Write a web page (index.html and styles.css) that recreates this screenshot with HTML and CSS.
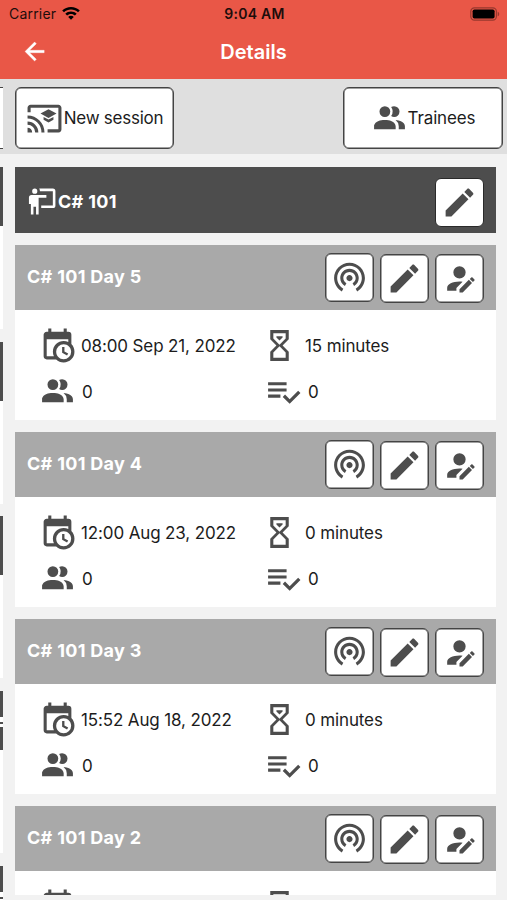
FILE: index.html
```html
<!DOCTYPE html>
<html lang="en">
<head>
    <meta charset="UTF-8">
    <meta name="viewport" content="width=device-width, initial-scale=1.0">
    <title>Details</title>
    <link rel="stylesheet" href="styles.css">
</head>
<body>
    <!-- icons -->
    <svg class="sprite">
        <symbol id="people" viewBox="0 0 24 24"><path d="M16 17V19H2V17S2 13 9 13 16 17 16 17M12.5 7.5A3.5 3.5 0 1 0 9 11A3.5 3.5 0 0 0 12.5 7.5M15.94 13A5.32 5.32 0 0 1 18 17V19H22V17S22 13.37 15.94 13M15 4A3.39 3.39 0 0 0 13.07 4.59A5 5 0 0 1 13.07 10.41A3.39 3.39 0 0 0 15 11A3.5 3.5 0 0 0 15 4Z"/></symbol>
        <symbol id="pencil" viewBox="0 0 24 24"><path d="M20.71,7.04C21.1,6.65 21.1,6 20.71,5.63L18.37,3.29C18,2.9 17.35,2.9 16.96,3.29L15.12,5.12L18.87,8.87M3,17.25V21H6.75L17.81,9.93L14.06,6.18L3,17.25Z"/></symbol>
        <symbol id="account-edit" viewBox="0 0 24 24"><path d="M21.7,13.35L20.7,14.35L18.65,12.3L19.65,11.3C19.86,11.09 20.21,11.09 20.42,11.3L21.7,12.58C21.91,12.79 21.91,13.14 21.7,13.35M12,18.94L18.06,12.88L20.11,14.93L14.06,21H12V18.94M12,14C7.58,14 4,15.79 4,18V20H10V18.11L14,14.11C13.34,14.03 12.67,14 12,14M12,4A4,4 0 0,0 8,8A4,4 0 0,0 12,12A4,4 0 0,0 16,8A4,4 0 0,0 12,4Z"/></symbol>
        <symbol id="broadcast" viewBox="0 0 24 24"><path d="M12 11c-1.1 0-2 .9-2 2s.9 2 2 2 2-.9 2-2-.9-2-2-2zm6 2c0-3.31-2.69-6-6-6s-6 2.69-6 6c0 2.22 1.21 4.15 3 5.19l1-1.74c-1.19-.7-2-1.97-2-3.45 0-2.21 1.79-4 4-4s4 1.79 4 4c0 1.48-.81 2.75-2 3.45l1 1.74c1.79-1.04 3-2.97 3-5.19zM12 3C6.48 3 2 7.48 2 13c0 3.7 2.01 6.92 4.99 8.65l1-1.73C5.61 18.53 4 15.96 4 13c0-4.42 3.58-8 8-8s8 3.58 8 8c0 2.96-1.61 5.53-4 6.92l1 1.73c2.99-1.73 5-4.95 5-8.65 0-5.52-4.48-10-10-10z"/></symbol>
        <symbol id="cast" viewBox="0 0 24 24"><path d="M1,10V12A9,9 0 0,1 10,21H12C12,14.92 7.07,10 1,10M1,14V16A5,5 0 0,1 6,21H8A7,7 0 0,0 1,14M1,18V21H4A3,3 0 0,0 1,18M21,3H3C1.89,3 1,3.89 1,5V8H3V5H21V19H14V21H21A2,2 0 0,0 23,19V5C23,3.89 22.1,3 21,3ZM14.6,6L9.4,8.8L14.6,11.6L19.8,8.8ZM11.4,11V12.8L14.6,14.6L17.8,12.8V11L14.6,12.7Z"/></symbol>
        <symbol id="board" viewBox="0 0 24 24"><path d="M20,17A2,2 0 0,0 22,15V4A2,2 0 0,0 20,2H9.46C9.81,2.61 10,3.3 10,4H20V15H11V17M15,7V9H9V22H7V16H5V22H3V14H1.5V9A2,2 0 0,1 3.5,7H15M8,4A2,2 0 0,1 6,6A2,2 0 0,1 4,4A2,2 0 0,1 6,2A2,2 0 0,1 8,4Z"/></symbol>
        <symbol id="calendar" viewBox="0 0 24 24"><path d="M15,13H16.5V15.82L18.94,17.23L18.19,18.53L15,16.69V13M19,8H5V19H9.67C9.24,18.09 9,17.07 9,16A7,7 0 0,1 16,9C17.07,9 18.09,9.24 19,9.67V8M5,21C3.89,21 3,20.1 3,19V5C3,3.89 3.89,3 5,3H6V1H8V3H16V1H18V3H19A2,2 0 0,1 21,5V11.1C22.24,12.36 23,14.09 23,16A7,7 0 0,1 16,23C14.09,23 12.36,22.24 11.1,21H5M16,11.15A4.85,4.85 0 0,0 11.15,16C11.15,18.68 13.32,20.85 16,20.85A4.85,4.85 0 0,0 20.85,16C20.85,13.32 18.68,11.15 16,11.15Z"/></symbol>
        <symbol id="sand" viewBox="0 0 24 24"><path d="M6,2H18V8L14,12L18,16V22H6V16L10,12L6,8V2M16,16.5L12,12.5L8,16.5V20H16V16.5M12,11.5L16,7.5V4H8V7.5L12,11.5M10,6H14V6.75L12,8.75L10,6.75V6Z"/></symbol>
        <symbol id="check" viewBox="0 0 24 24"><path d="M14,10H2V12H14V10M14,6H2V8H14V6M2,16H10V14H2V16M21.5,11.5L23,13L16,20L11.5,15.5L13,14L16,17L21.5,11.5Z"/></symbol>
        <symbol id="back" viewBox="0 0 24 24"><path d="M20,11V13H8L13.5,18.5L12.08,19.92L4.16,12L12.08,4.08L13.5,5.5L8,11H20Z"/></symbol>
    </svg>

    <header>
        <div class="status">
            <div class="carrier">
                Carrier
                <svg width="18" height="14" viewBox="0 0 18 14"><path d="M9 0C5.6 0 2.5 1.3 .2 3.5L2 5.3C3.8 3.6 6.3 2.6 9 2.6S14.2 3.6 16 5.3L17.8 3.5C15.5 1.3 12.4 0 9 0ZM9 4.5C6.8 4.5 4.8 5.3 3.3 6.7L5.1 8.5C6.1 7.6 7.5 7 9 7S11.9 7.6 12.9 8.5L14.7 6.7C13.2 5.3 11.2 4.5 9 4.5ZM9 8.8C7.9 8.8 6.9 9.2 6.2 9.9L9 12.8L11.8 9.9C11.1 9.2 10.1 8.8 9 8.8Z"/></svg>
            </div>
            <div class="clock">9:04 AM</div>
            <svg class="battery" width="30" height="14" viewBox="0 0 30 14">
                <rect class="case" x=".8" y=".8" width="25.6" height="12.4" rx="3.6"/>
                <rect x="2.6" y="2.5" width="22" height="9" rx="1.8"/>
                <path class="tip" d="M27.7 4.7C29.7 5.4 29.7 8.6 27.7 9.3Z"/>
            </svg>
        </div>
        <div class="nav">
            <svg class="back"><use href="#back"/></svg>
            <h1>Details</h1>
        </div>
    </header>

    <div class="page">
        <!-- edge of the previous list -->
        <div class="peek">
            <div class="peek-bar"><div class="peek-button"></div></div>
            <div class="peek-card"></div>
            <div class="peek-card"></div>
            <div class="peek-card"></div>
            <div class="peek-card long"></div>
            <div class="peek-card long"></div>
        </div>

        <main>
            <div class="toolbar">
                <button class="wide new"><svg class="icon"><use href="#cast"/></svg>New session</button>
                <button class="wide"><svg class="icon"><use href="#people"/></svg>Trainees</button>
            </div>
            <div class="list">
                <div class="course">
                    <svg class="icon small"><use href="#board"/></svg>
                    <h2>C# 101</h2>
                    <button class="square"><svg class="icon"><use href="#pencil"/></svg></button>
                </div>

                <section class="session">
                    <div class="head">
                        <h2>C# 101 Day 5</h2>
                        <button class="square live"><svg class="icon"><use href="#broadcast"/></svg></button>
                        <button class="square"><svg class="icon"><use href="#pencil"/></svg></button>
                        <button class="square"><svg class="icon"><use href="#account-edit"/></svg></button>
                    </div>
                    <div class="info">
                        <div class="date"><svg class="icon"><use href="#calendar"/></svg>08:00 Sep 21, 2022</div>
                        <div class="time"><svg class="icon"><use href="#sand"/></svg>15 minutes</div>
                        <div class="count"><svg class="icon"><use href="#people"/></svg>0</div>
                        <div class="count done"><svg class="icon"><use href="#check"/></svg>0</div>
                    </div>
                </section>

                <section class="session">
                    <div class="head">
                        <h2>C# 101 Day 4</h2>
                        <button class="square live"><svg class="icon"><use href="#broadcast"/></svg></button>
                        <button class="square"><svg class="icon"><use href="#pencil"/></svg></button>
                        <button class="square"><svg class="icon"><use href="#account-edit"/></svg></button>
                    </div>
                    <div class="info">
                        <div class="date"><svg class="icon"><use href="#calendar"/></svg>12:00 Aug 23, 2022</div>
                        <div class="time"><svg class="icon"><use href="#sand"/></svg>0 minutes</div>
                        <div class="count"><svg class="icon"><use href="#people"/></svg>0</div>
                        <div class="count done"><svg class="icon"><use href="#check"/></svg>0</div>
                    </div>
                </section>

                <section class="session">
                    <div class="head">
                        <h2>C# 101 Day 3</h2>
                        <button class="square live"><svg class="icon"><use href="#broadcast"/></svg></button>
                        <button class="square"><svg class="icon"><use href="#pencil"/></svg></button>
                        <button class="square"><svg class="icon"><use href="#account-edit"/></svg></button>
                    </div>
                    <div class="info">
                        <div class="date"><svg class="icon"><use href="#calendar"/></svg>15:52 Aug 18, 2022</div>
                        <div class="time"><svg class="icon"><use href="#sand"/></svg>0 minutes</div>
                        <div class="count"><svg class="icon"><use href="#people"/></svg>0</div>
                        <div class="count done"><svg class="icon"><use href="#check"/></svg>0</div>
                    </div>
                </section>

                <section class="session">
                    <div class="head">
                        <h2>C# 101 Day 2</h2>
                        <button class="square live"><svg class="icon"><use href="#broadcast"/></svg></button>
                        <button class="square"><svg class="icon"><use href="#pencil"/></svg></button>
                        <button class="square"><svg class="icon"><use href="#account-edit"/></svg></button>
                    </div>
                    <div class="info">
                        <div class="date"><svg class="icon"><use href="#calendar"/></svg></div>
                        <div class="time"><svg class="icon"><use href="#sand"/></svg></div>
                    </div>
                </section>
            </div>
        </main>
    </div>
</body>
</html>
```
FILE: styles.css
```css
* {
    box-sizing: border-box;
}

body {
    margin: 0;
    height: 900px;
    overflow: hidden;
    display: flex;
    flex-direction: column;
    background-color: #f2f2f2;
    font-family: 'Inter', sans-serif;
    font-size: 17px;
    letter-spacing: -0.13px;
    color: #1c1c1c;
}

.sprite {
    display: none;
}

header {
    height: 79px;
    flex: none;
    background-color: #e95747;
}

.status {
    display: grid;
    grid-template-columns: 1fr auto 1fr;
    align-items: center;
    height: 27px;
    padding: 0 7px 0 9px;
    font-size: 14px;
    color: #1d0d0b;
}

.carrier {
    display: flex;
    align-items: center;
    gap: 6px;
    letter-spacing: 0.2px;
}

.clock {
    font-weight: 600;
    letter-spacing: 0.25px;
}

.battery {
    justify-self: end;
}

.case {
    fill: none;
    stroke: #96382e;
    stroke-width: 1.2;
}

.tip {
    fill: #96382e;
}

.nav {
    display: grid;
    grid-template-columns: 1fr auto 1fr;
    align-items: center;
    height: 50px;
    color: white;
}

.back {
    width: 29px;
    height: 29px;
    margin: 0 0 1px 20px;
    fill: white;
    stroke: white;
    stroke-width: 0.3;
}

h1 {
    margin: 0;
    font-size: 20px;
    font-weight: 600;
    letter-spacing: 0;
}

h2 {
    margin: 0;
    font-size: 18px;
    font-weight: 700;
    letter-spacing: 0.3px;
    color: white;
}

.page {
    flex: 1;
    min-height: 0;
    display: flex;
}

.peek {
    width: 3px;
    overflow: hidden;
}

.peek-bar {
    height: 75px;
    padding-top: 8px;
    margin-bottom: 13px;
    background-color: #dfdfdf;
}

.peek-button {
    height: 62px;
    background-color: white;
    border: solid #444;
    border-width: 1px 0;
}

.peek-card {
    height: 162px;
    margin-bottom: 12.7px;
    background: linear-gradient(#4d4d4d 59px, white 59px);
}

.peek-card.long {
    background: linear-gradient(#4d4d4d 26px, white 26px 31px, #4d4d4d 31px 33px, white 33px 36px, #4d4d4d 36px 59px, white 59px);
}

main {
    flex: 1;
    display: flex;
    flex-direction: column;
    min-height: 0;
}

.toolbar {
    flex: none;
    display: flex;
    justify-content: space-between;
    height: 75px;
    padding: 8px 4px 0 12px;
    background-color: #dfdfdf;
}

button {
    display: flex;
    align-items: center;
    justify-content: center;
    padding: 0;
    font: inherit;
    letter-spacing: inherit;
    color: inherit;
    background-color: white;
    border: 1px solid #444;
    border-radius: 6px;
    box-shadow: inset 0 0 0 0.5px #444;
}

.wide {
    width: 160px;
    height: 62px;
}

.wide.new {
    width: 159px;
    gap: 1px;
    letter-spacing: -0.25px;
}

.square {
    flex: none;
    width: 49px;
    height: 49px;
}

.icon {
    flex: none;
    width: 37px;
    height: 37px;
    fill: #4d4d4d;
}

.icon.small {
    width: 31px;
    height: 31px;
    fill: white;
}

.list {
    flex: 1;
    min-height: 0;
    overflow: hidden;
    display: flex;
    flex-direction: column;
    gap: 12px;
    margin-bottom: 5px;
    padding: 13px 11px 0 12px;
}

.course {
    flex: none;
    display: flex;
    align-items: center;
    height: 66px;
    padding: 2px 12px 0 12px;
    background-color: #4d4d4d;
}

.course .square {
    margin: 2px 0 0 auto;
    border-color: #2a2a2a;
    box-shadow: none;
}

.session {
    flex: none;
    height: 175px;
    background-color: white;
}

.head {
    display: flex;
    align-items: center;
    gap: 6px;
    height: 65px;
    padding: 0 12px;
    background-color: #a9a9a9;
}

.head h2 {
    flex: 1;
    margin-bottom: 2px;
}

.head .square {
    margin-top: 1px;
}

.head .live {
    margin-top: -1px;
    padding-bottom: 2px;
}

.info {
    display: grid;
    grid-template-columns: 222px 1fr;
    row-gap: 9px;
    padding: 17px 0 0 24px;
}

.info div {
    display: flex;
    align-items: center;
    gap: 5px;
    height: 37px;
    line-height: 38px;
}

.info .time {
    gap: 7px;
    line-height: 40px;
}

.info .count {
    gap: 6px;
    line-height: 40px;
}

.info .done {
    padding-left: 4px;
}
```
